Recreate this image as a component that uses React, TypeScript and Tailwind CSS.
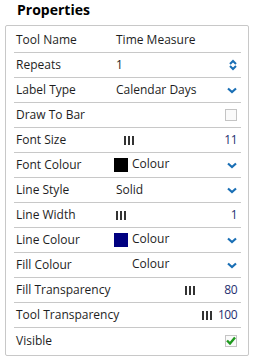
import React from 'react';

type Row = {
    label: string;
    kind: 'text' | 'spin' | 'select' | 'check' | 'slider' | 'colour';
    value?: string;
    swatch?: string;
    grip?: string; // left offset class of the slider grip
    checked?: boolean;
};

const rows: Row[] = [
    { label: 'Tool Name', kind: 'text', value: 'Time Measure' },
    { label: 'Repeats', kind: 'spin', value: '1' },
    { label: 'Label Type', kind: 'select', value: 'Calendar Days' },
    { label: 'Draw To Bar', kind: 'check', checked: false },
    { label: 'Font Size', kind: 'slider', value: '11', grip: 'ml-[8px]' },
    { label: 'Font Colour', kind: 'colour', swatch: 'bg-black' },
    { label: 'Line Style', kind: 'select', value: 'Solid' },
    { label: 'Line Width', kind: 'slider', value: '1', grip: 'ml-0' },
    { label: 'Line Colour', kind: 'colour', swatch: 'bg-[#000080]' },
    { label: 'Fill Colour', kind: 'colour', swatch: 'bg-white' },
    { label: 'Fill Transparency', kind: 'slider', value: '80', grip: 'ml-[69px]' },
    { label: 'Tool Transparency', kind: 'slider', value: '100', grip: 'ml-[86px]' },
    { label: 'Visible', kind: 'check', checked: true },
];

function Chevron() {
    return (
        <svg width="10" height="7" viewBox="0 0 10 7" className="shrink-0">
            <path d="M1 1.5 L5 5 L9 1.5" fill="none" stroke="#1a6fb5" strokeWidth="2.2" />
        </svg>
    );
}

function Spinner() {
    return (
        <svg width="8" height="12" viewBox="0 0 8 12" className="shrink-0">
            <path d="M1 5 L4 2 L7 5" fill="none" stroke="#1a6fb5" strokeWidth="2" />
            <path d="M1 7 L4 10 L7 7" fill="none" stroke="#1a6fb5" strokeWidth="2" />
        </svg>
    );
}

function Grip() {
    return (
        <span className="flex gap-[2px] h-[9px] items-stretch">
            <span className="w-[2px] bg-[#333]" />
            <span className="w-[2px] bg-[#333]" />
            <span className="w-[2px] bg-[#333]" />
        </span>
    );
}

function Value({ row }: { row: Row }) {
    switch (row.kind) {
        case 'text':
            return <span>{row.value}</span>;
        case 'spin':
            return (
                <div className="flex items-center justify-between w-full">
                    <span>{row.value}</span>
                    <Spinner />
                </div>
            );
        case 'select':
            return (
                <div className="flex items-center justify-between w-full">
                    <span>{row.value}</span>
                    <Chevron />
                </div>
            );
        case 'check':
            return (
                <div className="flex justify-end w-full">
                    <span className="w-[12px] h-[12px] border border-[#c4c4c4] bg-[#fafafa] flex items-center justify-center">
                        {row.checked && (
                            <svg width="10" height="9" viewBox="0 0 10 9">
                                <path d="M1 4.5 L4 7.5 L9 1.5" fill="none" stroke="#1f9a1f" strokeWidth="2.4" />
                            </svg>
                        )}
                    </span>
                </div>
            );
        case 'slider':
            return (
                <div className="flex items-center w-full">
                    <span className={row.grip}>
                        <Grip />
                    </span>
                    <span className="ml-auto text-[#1f2f70] tracking-[-0.5px]">{row.value}</span>
                </div>
            );
        case 'colour':
            return (
                <div className="flex items-center w-full">
                    <span className={`w-[14px] h-[14px] -ml-[2px] ${row.swatch}`} />
                    <span className="ml-[4px] -mt-[2px]">Colour</span>
                    <span className="ml-auto">
                        <Chevron />
                    </span>
                </div>
            );
    }
}

export default function App() {
    return (
        <div className="w-[253px] h-[360px] bg-white text-[#1e1e1e] font-['Open_Sans',sans-serif] text-[12px]">
            {/* Заглавие */}
            <div className="pl-[17px] h-[25px] leading-[20px] text-[14px] font-bold text-black">Properties</div>

            {/* Панел */}
            <div className="ml-[5px] w-[244px] border border-[#c8c8c8] rounded-[2px] pl-[8px] pr-[7px] pt-[2px] pb-[2px]">
                {rows.map((row, i) => (
                    <div
                        key={row.label}
                        className={`flex items-center h-[25px] pl-[2px] pr-[4px] ${i < rows.length - 1 ? 'border-b border-[#c8c8c8]' : ''}`}
                    >
                        <span className="w-[100px] shrink-0 whitespace-nowrap">{row.label}</span>
                        <div className="flex-1 flex items-center">
                            <Value row={row} />
                        </div>
                    </div>
                ))}
            </div>
        </div>
    );
}
